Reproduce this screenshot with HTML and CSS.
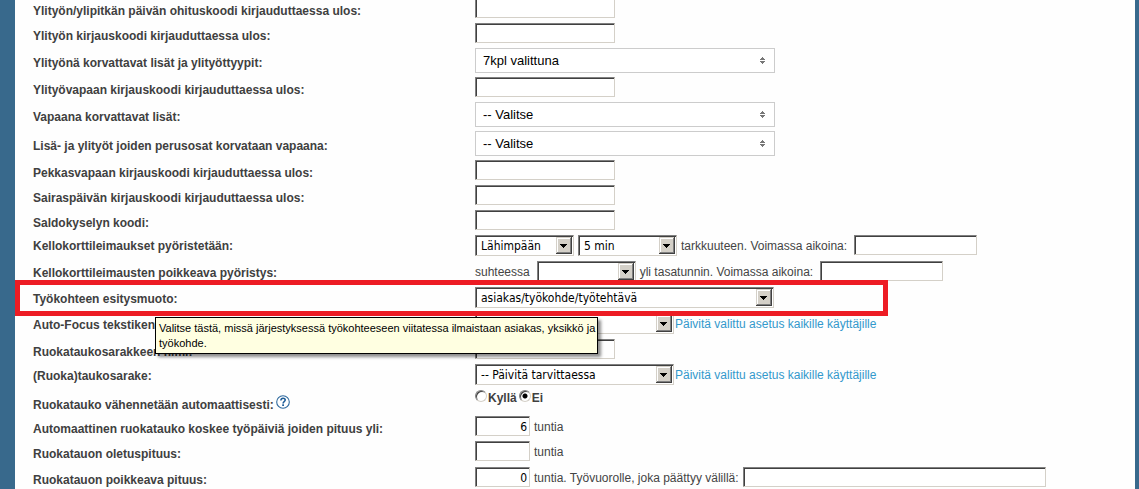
FILE: index.html
```html
<!DOCTYPE html>
<html lang="fi">
<head>
<meta charset="utf-8">
<title>Asetukset</title>
<link rel="stylesheet" href="styles.css">
</head>
<body>
<main class="page">
<form class="form">
  <div class="row"><label class="label" for="f1">Ylityön/ylipitkän päivän ohituskoodi kirjauduttaessa ulos:</label><div class="field"><input class="box box-code" id="f1" type="text"></div></div>
  <div class="row"><label class="label" for="f2">Ylityön kirjauskoodi kirjauduttaessa ulos:</label><div class="field"><input class="box box-code" id="f2" type="text"></div></div>
  <div class="row row-multi"><label class="label" for="f3">Ylityönä korvattavat lisät ja ylityöttyypit:</label><div class="field"><select class="multi" id="f3"><option>7kpl valittuna</option></select></div></div>
  <div class="row"><label class="label" for="f4">Ylityövapaan kirjauskoodi kirjauduttaessa ulos:</label><div class="field"><input class="box box-code" id="f4" type="text"></div></div>
  <div class="row row-multi"><label class="label" for="f5">Vapaana korvattavat lisät:</label><div class="field"><select class="multi" id="f5"><option>-- Valitse</option></select></div></div>
  <div class="row row-multi"><label class="label" for="f6">Lisä- ja ylityöt joiden perusosat korvataan vapaana:</label><div class="field"><select class="multi" id="f6"><option>-- Valitse</option></select></div></div>
  <div class="row"><label class="label" for="f7">Pekkasvapaan kirjauskoodi kirjauduttaessa ulos:</label><div class="field"><input class="box box-code" id="f7" type="text"></div></div>
  <div class="row"><label class="label" for="f8">Sairaspäivän kirjauskoodi kirjauduttaessa ulos:</label><div class="field"><input class="box box-code" id="f8" type="text"></div></div>
  <div class="row"><label class="label" for="f9">Saldokyselyn koodi:</label><div class="field"><input class="box box-code" id="f9" type="text"></div></div>
  <div class="row row-select row-high"><label class="label" for="f10">Kellokorttileimaukset pyöristetään:</label><div class="field">
    <select class="drop drop-short" id="f10"><option>Lähimpään</option></select>
    <select class="drop drop-short" aria-label="Tarkkuus"><option>5 min</option></select>
    <label class="inline" for="f10t">tarkkuuteen. Voimassa aikoina:</label><input class="box box-time" id="f10t" type="text"></div></div>
  <div class="row row-select"><label class="label" for="f11">Kellokorttileimausten poikkeava pyöristys:</label><div class="field">
    <span class="inline">suhteessa</span><select class="drop drop-short" id="f11"><option></option></select>
    <label class="inline" for="f11t">yli tasatunnin. Voimassa aikoina:</label><input class="box box-time" id="f11t" type="text"></div></div>
  <div class="row row-select row-marked"><label class="label" for="f12">Työkohteen esitysmuoto:</label><div class="field"><select class="drop drop-long" id="f12" aria-describedby="tip"><option>asiakas/työkohde/työtehtävä</option></select></div>
    <div class="marker"></div>
    <div class="tip" id="tip" role="tooltip">Valitse tästä, missä järjestyksessä työkohteeseen viitatessa ilmaistaan asiakas, yksikkö ja työkohde.</div></div>
  <div class="row row-select"><label class="label" for="f13">Auto-Focus tekstikenttään:</label><div class="field field-link"><select class="drop drop-mid" id="f13"><option></option></select><a class="link" href="#">Päivitä valittu asetus kaikille käyttäjille</a></div></div>
  <div class="row"><label class="label" for="f14">Ruokataukosarakkeen nimi:</label><div class="field"><input class="box box-code" id="f14" type="text"></div></div>
  <div class="row row-select"><label class="label" for="f15">(Ruoka)taukosarake:</label><div class="field field-link"><select class="drop drop-mid" id="f15"><option>-- Päivitä tarvittaessa</option></select><a class="link" href="#">Päivitä valittu asetus kaikille käyttäjille</a></div></div>
  <div class="row row-select row-radio"><div class="label"><span>Ruokatauko vähennetään automaattisesti:</span>
    <svg class="help" viewBox="0 0 14 14" role="img" aria-label="Ohje"><circle cx="7" cy="7" r="6.3" fill="#fff" stroke="#2f6a9e" stroke-width="1.1"/><path d="M4.9 5.4C4.9 3.9 5.8 3.3 7 3.3S9.2 4 9.2 5.1C9.2 6.6 7.1 6.7 7.1 8.4" fill="none" stroke="#1f5d98" stroke-width="1.6"/><rect x="6.2" y="9.3" width="1.8" height="1.7" fill="#1f5d98"/></svg></div>
    <div class="field field-radio"><label class="choice"><input class="radio" type="radio" name="auto">Kyllä</label><label class="choice"><input class="radio" type="radio" name="auto" checked>Ei</label></div></div>
  <div class="row"><label class="label" for="f17">Automaattinen ruokatauko koskee työpäiviä joiden pituus yli:</label><div class="field"><input class="box box-num" id="f17" type="text" value="6"><span>tuntia</span></div></div>
  <div class="row row-select row-plain"><label class="label" for="f18">Ruokatauon oletuspituus:</label><div class="field"><input class="box box-num" id="f18" type="text"><span>tuntia</span></div></div>
  <div class="row"><label class="label" for="f19">Ruokatauon poikkeava pituus:</label><div class="field"><input class="box box-num" id="f19" type="text" value="0"><label for="f19t">tuntia. Työvuorolle, joka päättyy välillä:</label><input class="box box-range" id="f19t" type="text"></div></div>
</form>
</main>
</body>
</html>
```
FILE: styles.css
```css
* { box-sizing: border-box; }
html { background: #38698c; overflow: hidden; }
body {
  margin: 0;
  padding: 0 4px 0 15px;
  color: #444;
  font: 12px/16px "Liberation Sans", Arial, sans-serif;
}
.page { background: #fefefe; min-height: 100vh; overflow: hidden; padding-left: 18px; }
.form { display: flex; flex-direction: column; gap: 4px; margin-top: -2px; }
.row { display: grid; grid-template-columns: 442px 1fr; align-items: start; min-height: 21px; }
.label { padding-top: 5px; color: #404040; font-weight: bold; white-space: nowrap; }
.field { display: flex; align-items: start; gap: 4px; line-height: 22px; height: 21px; white-space: nowrap; }
.field-link { gap: 1px; }
.inline { padding-right: 3px; }
.row-multi { min-height: 25px; }
.row-multi .label { padding-top: 7px; }
.row-select { min-height: 22px; }
.row-select .label { padding-top: 4px; }
.row-high .label { padding-top: 3px; }
.row-plain .label { padding-top: 5px; }
.row-radio .label { display: flex; gap: 2px; padding-top: 5px; line-height: 20px; }
.row-radio { height: 22px; }
.row-marked { position: relative; }

.box {
  height: 20px;
  margin: 0;
  padding: 0 4px;
  background: #fff;
  border: 1px solid;
  border-color: #808080 #d4d0c8 #d4d0c8 #808080;
  border-radius: 0;
  box-shadow: inset 1px 1px 0 #404040;
  color: #000;
  font: 12px/16px "DejaVu Sans Condensed", "DejaVu Sans", sans-serif;
}
.box-code { width: 140px; }
.box-time { width: 123px; }
.box-num { width: 55px; padding: 2px 2px 0; text-align: right; }
.box-range { width: 303px; }

.drop {
  appearance: none;
  height: 21px;
  margin: 0;
  padding: 0 20px 0 5px;
  border: 1px solid;
  border-color: #808080 #d4d0c8 #d4d0c8 #808080;
  border-radius: 0;
  box-shadow: inset 1px 1px 0 #404040;
  color: #000;
  font: 12px/16px "DejaVu Sans Condensed", "DejaVu Sans", sans-serif;
  background: #fff url("data:image/svg+xml,%3Csvg xmlns='http://www.w3.org/2000/svg' width='16' height='17' shape-rendering='crispEdges'%3E%3Cpath fill='%23404040' d='M0 0h16v17H0z'/%3E%3Cpath fill='%23d4d0c8' d='M0 0h15v16H0z'/%3E%3Cpath fill='%23808080' d='M1 1h14v15H1z'/%3E%3Cpath fill='%23fff' d='M1 1h13v14H1z'/%3E%3Cpath fill='%23d4d0c8' d='M2 2h12v13H2z'/%3E%3Cpath d='M4 7h7v1H4zM5 8h5v1H5zM6 9h3v1H6zM7 10h1v1H7z'/%3E%3C/svg%3E") no-repeat right 1px top 1px;
}
.drop-short { width: 99px; }
.drop-mid { width: 199px; }
.drop-long { width: 299px; }

.multi {
  appearance: none;
  width: 300px;
  height: 25px;
  margin: 0;
  padding: 0 24px 0 7px;
  border: 1px solid #ccc;
  border-radius: 0;
  color: #000;
  font: 13px/18px "Liberation Sans", Arial, sans-serif;
  background: #fff url("data:image/svg+xml,%3Csvg xmlns='http://www.w3.org/2000/svg' width='5' height='7' shape-rendering='crispEdges'%3E%3Cpath fill='%23777' d='M2 0h1v1H2zM1 1h3v1H1zM0 2h5v1H0zM0 4h5v1H0zM1 5h3v1H1zM2 6h1v1H2z'/%3E%3C/svg%3E") no-repeat right 9px center;
}

.link { color: #3399cc; text-decoration: none; }
.help { width: 14px; height: 14px; }
.field-radio { gap: 2px; line-height: 16px; color: #404040; font-weight: bold; }
.choice { display: flex; gap: 1px; }
.radio {
  appearance: none;
  width: 12px;
  height: 12px;
  margin: 0;
  border: 1px solid;
  border-color: #808080 #d4d0c8 #d4d0c8 #808080;
  border-radius: 50%;
  background: #fff;
  box-shadow: inset 1px 1px 0 #404040;
}
.radio:checked { background: radial-gradient(circle, #000 2px, #fff 3px); }

.marker {
  position: absolute;
  top: -7px;
  left: -18px;
  width: 873px;
  height: 36px;
  border: 5px solid #ed1c24;
  pointer-events: none;
  z-index: 1;
}
.tip {
  position: absolute;
  top: 30px;
  left: 122px;
  width: 443px;
  padding: 3px 0 2px 3px;
  background: #ffffe1;
  border: 1px solid #000;
  box-shadow: 3px 3px 3px rgba(0, 0, 0, .45);
  color: #000;
  font: 11px/15px "Liberation Sans", Arial, sans-serif;
  z-index: 2;
}
```
